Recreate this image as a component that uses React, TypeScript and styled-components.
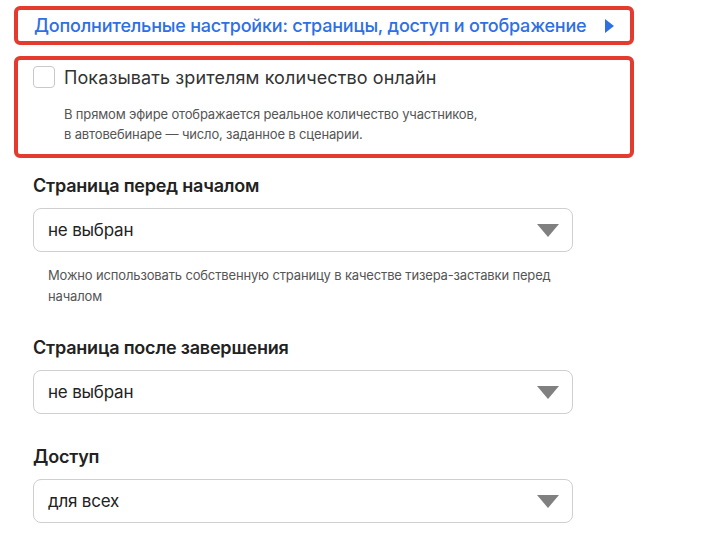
import styled, { createGlobalStyle } from 'styled-components'

const GlobalStyle = createGlobalStyle`
  body {
    margin: 0;
    background: #fff;
    font-family: Inter, "Noto Sans", sans-serif;
    color: #222;
  }
`

const Page = styled.div`
  padding: 6px 0 0 14px;
  width: 620px;
`

const Highlight = styled.div`
  border: 4px solid #e53b2f;
  border-radius: 6px;
  box-sizing: border-box;
  width: 620px;
`

const Toggle = styled(Highlight)`
  height: 39px;
  display: flex;
  align-items: center;
  justify-content: space-between;
  padding: 0 16px 0 16px;
  color: #2f6fe4;
  font-size: 18px;
  font-weight: 500;
  letter-spacing: -0.2px;
  cursor: pointer;
`

const Arrow = styled.span`
  width: 0;
  height: 0;
  border-top: 7px solid transparent;
  border-bottom: 7px solid transparent;
  border-left: 9px solid #2f6fe4;
`

const OnlineBox = styled(Highlight)`
  margin-top: 11px;
  padding: 6px 15px 10px;
`

const CheckRow = styled.label`
  display: flex;
  align-items: center;
  gap: 9px;
  font-size: 18px;
  color: #333;
  letter-spacing: 0.1px;
`

const Box = styled.span`
  width: 22px;
  height: 22px;
  box-sizing: border-box;
  border: 1px solid #c9c9c9;
  border-radius: 4px;
  background: #fff;
`

const Note = styled.p<{ $indent: number }>`
  margin: 0;
  padding-left: ${(p) => p.$indent}px;
  font-size: 13px;
  line-height: 20px;
  color: #555;
  letter-spacing: -0.15px;
`

const OnlineNote = styled(Note)`
  margin-top: 16px;
`

const Field = styled.div<{ $top: number }>`
  margin-top: ${(p) => p.$top}px;
  padding-left: 19px;
`

const Label = styled.div`
  font-size: 18px;
  font-weight: 600;
  color: #222;
  line-height: 22px;
  letter-spacing: -0.2px;
`

const Select = styled.div`
  margin-top: 11px;
  width: 540px;
  height: 44px;
  box-sizing: border-box;
  border: 1px solid #cfcfcf;
  border-radius: 8px;
  display: flex;
  align-items: center;
  justify-content: space-between;
  padding: 0 13px 0 14px;
  font-size: 17px;
  color: #222;
  letter-spacing: -0.2px;
`

const Caret = styled.span`
  width: 0;
  height: 0;
  border-left: 11px solid transparent;
  border-right: 11px solid transparent;
  border-top: 13px solid #808080;
`

const Helper = styled(Note)`
  margin-top: 13px;
  line-height: 21px;
  width: 520px;
`

export default function App() {
  return (
    <>
      <GlobalStyle />
      <Page>
        <Toggle>
          <span>Дополнительные настройки: страницы, доступ и отображение</span>
          <Arrow />
        </Toggle>
        <OnlineBox>
          <CheckRow>
            <Box />
            Показывать зрителям количество онлайн
          </CheckRow>
          <OnlineNote $indent={31}>
            В прямом эфире отображается реальное количество участников,
            <br />в автовебинаре — число, заданное в сценарии.
          </OnlineNote>
        </OnlineBox>
        <Field $top={17}>
          <Label>Страница перед началом</Label>
          <Select>
            не выбран
            <Caret />
          </Select>
          <Helper $indent={15}>
            Можно использовать собственную страницу в качестве тизера-заставки перед
            началом
          </Helper>
        </Field>
        <Field $top={30}>
          <Label>Страница после завершения</Label>
          <Select>
            не выбран
            <Caret />
          </Select>
        </Field>
        <Field $top={32}>
          <Label>Доступ</Label>
          <Select>
            для всех
            <Caret />
          </Select>
        </Field>
      </Page>
    </>
  )
}
